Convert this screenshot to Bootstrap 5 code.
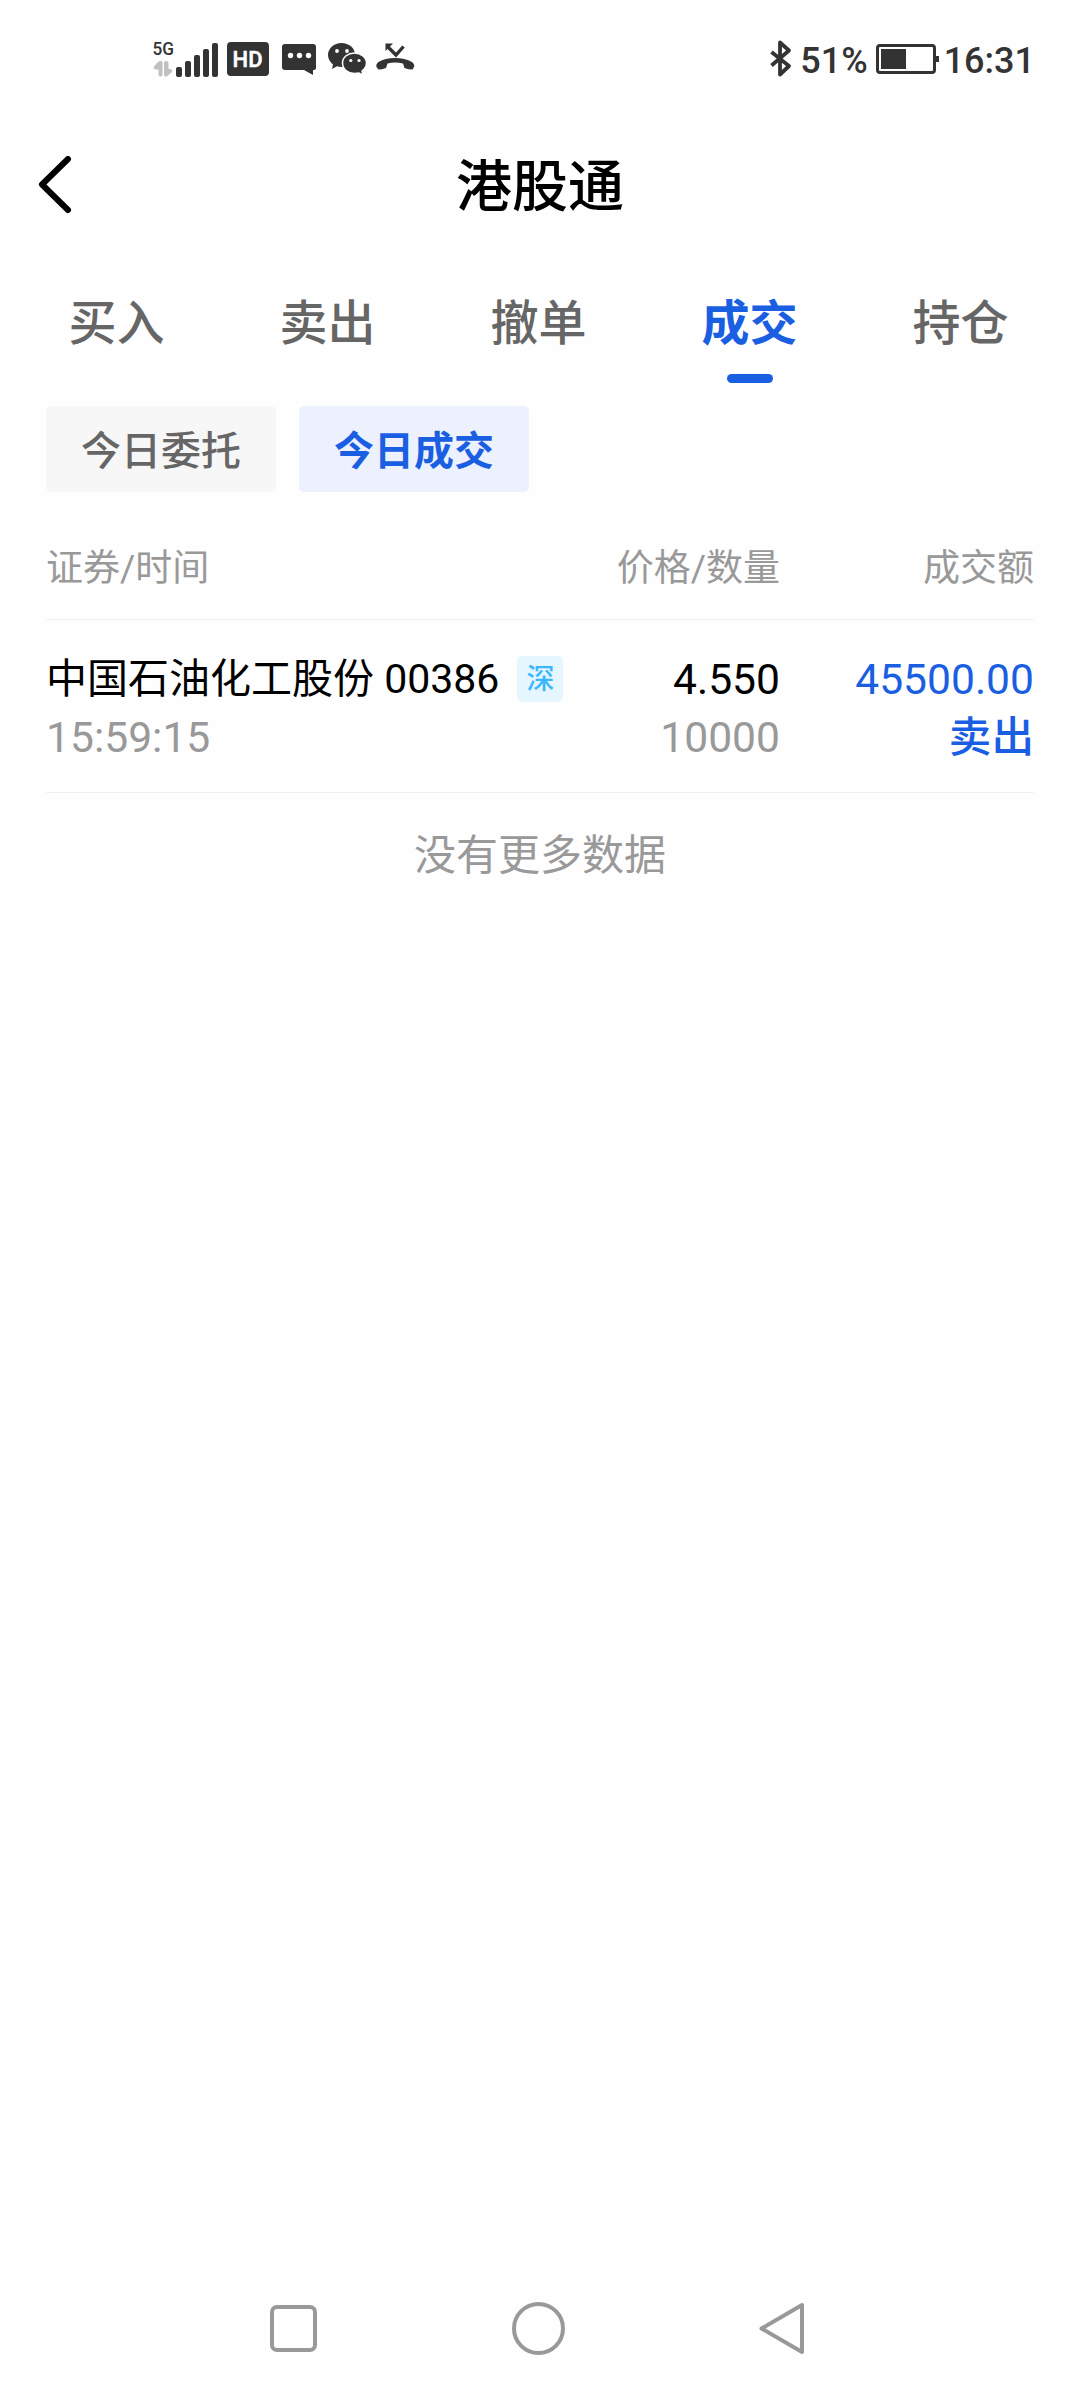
<!DOCTYPE html>
<html lang="zh-CN">
<head>
<meta charset="utf-8">
<meta name="viewport" content="width=device-width, initial-scale=1">
<title>港股通</title>
<link rel="stylesheet" href="https://cdn.jsdelivr.net/npm/bootstrap@5.3.0/dist/css/bootstrap.min.css">
<style>
  :root { --blue: #1a5fe2; --ink: #333; --muted: #999; --text: #666; }
  body { font-family: Roboto, "Noto Sans CJK SC", sans-serif; background: #fefefe; color: #000; height: 2400px; overflow: hidden; }
  svg { display: block; flex: none; }
  .status-bar { height: 120px; padding: 38px 45px 0 150px; color: var(--ink); }
  .status-bar .cell { height: 42px; }
  .status-text { font-size: 36px; font-weight: 500; line-height: 42px; padding-top: 3px; }
  .clock { margin-left: 4px; }
  .title-bar { height: 132px; padding: 0 36px; }
  .title-bar h1 { font-size: 56px; line-height: 64px; font-weight: 500; padding-top: 2px; }
  .side { width: 40px; }
  .trade-tabs { padding: 0 14px 0 11px; height: 154px; }
  .trade-tabs .nav-link { color: var(--text); font-size: 48px; line-height: 60px; padding: 42px 0 0; font-weight: 500; height: 100%; }
  .trade-tabs .nav-link.active { color: var(--blue); font-weight: 700; }
  .trade-tabs .bar { display: block; width: 46px; height: 9px; border-radius: 5px; background: var(--blue); margin: 20px auto 0; }
  .filters { padding: 0 46px; gap: 23px; }
  .filters .btn { width: 230px; height: 86px; padding: 6px 0 0; border: 0; border-radius: 5px; font-size: 40px; line-height: 80px; font-weight: 500; background: #f7f7f7; color: var(--text); }
  .filters .btn.active { background: #ecf1fd; color: var(--blue); font-weight: 700; }
  .deals { padding: 0 46px; }
  .line-row { border-bottom: 1px solid #f1f1f1; }
  .head { height: 128px; font-size: 37px; line-height: 44px; padding-top: 55px; color: var(--muted); }
  .deal { height: 173px; padding-top: 30px; font-size: 42.600px; line-height: 58px; }
  .c-price { width: 300px; }
  .c-sum { width: 254px; }
  .stock { font-size: 41px; }
  .exch { width: 46px; height: 46px; border-radius: 6px; background: #e5f6ff; color: #3ab7ff; font-size: 28px; font-weight: 500; line-height: 48px; margin-left: 18px; }
  .muted { color: var(--muted); }
  .blue { color: var(--blue); }
  .sell { font-weight: 500; }
  .none { font-size: 42px; line-height: 60px; margin-top: 33px; }
  .nav-keys { padding: 0 275px 45px 270px; }
</style>
<script src="https://cdn.jsdelivr.net/npm/bootstrap@5.3.0/dist/js/bootstrap.bundle.min.js"></script>
</head>
<body class="d-flex flex-column">
  <div class="status-bar d-flex justify-content-between align-items-start">
    <svg width="270" height="42" viewBox="150 38 270 42" fill="#333">
      <text x="152.500" y="55" font-size="18.500" font-weight="500" textLength="21.500" lengthAdjust="spacingAndGlyphs">5G</text>
      <path d="M154 66.500l4-4.500q1.500-1.500 3.500-1 1 .3 1 2v11.500q0 2-2 2t-2-2V69.500h-2.500q-3-.500-2-3zM172 72l-4 3.500q-1.500 1.500-3 1-1-.500-1-2V63q0-2 2-2t2.500 2v6h1.500q3 .5 2 3z" fill="#c0c0c0"/>
      <rect x="176" y="67" width="6" height="10" rx="2"/><rect x="185" y="61" width="6" height="16" rx="2"/><rect x="194" y="55" width="6" height="22" rx="2"/><rect x="203" y="49" width="6" height="28" rx="2"/><rect x="212" y="43" width="6" height="34" rx="2"/>
      <rect x="227" y="42" width="42" height="34" rx="4"/>
      <text x="232.500" y="67" font-size="22" font-weight="500" fill="#fff" stroke="#fff" stroke-width=".5" textLength="30" lengthAdjust="spacing">HD</text>
      <path d="M285 44h28q3 0 3 3v21q0 2-3 2v5l-9-5h-19q-3 0-3-3V47q0-3 3-3z"/>
      <g fill="#fefefe"><circle cx="290.500" cy="55.500" r="2.700"/><circle cx="299.500" cy="55.500" r="2.700"/><circle cx="308.500" cy="55.500" r="2.700"/></g>
      <path d="M341.500 43c7.500 0 13.500 5 13.500 11.500S349 67 341.500 67q-2.500 0-4.500-.7l-5 2.700 1-4.500c-3-2.300-5-5.800-5-9.500C328 48.500 334 43 341.500 43z"/>
      <circle cx="337" cy="51" r="1.900" fill="#fefefe"/><circle cx="347" cy="51" r="1.900" fill="#fefefe"/>
      <path d="M354.500 53c6.500 0 12 4.500 12 10 0 3.500-1.800 6-4.500 8l1 4.500-4-2.500q-2 .5-4.500.5c-6.500 0-12-4.500-12-10.500s5.500-10 12-10z" stroke="#fefefe" stroke-width="1.500"/>
      <circle cx="350.800" cy="60.500" r="1.600" fill="#fefefe"/><circle cx="359" cy="60.500" r="1.600" fill="#fefefe"/>
      <path d="M376.500 67q-1-2.500 2-5Q385 58 395 58t17 4q3 2.500 2 5l-1.500 2.500q-4 0-8-1.500l-1.500-4.500q-8-2-15.500 0L386 68q-4 1.500-7.500 1.500z"/>
      <path d="M388 47l8 8 7.500-8.500" fill="none" stroke="#333" stroke-width="3.400"/><path d="M385.500 43.500h7.500l-7.500 7.500z"/>
    </svg>
    <div class="d-flex align-items-center cell">
      <svg width="22" height="38" viewBox="770 40 22 38" fill="none" stroke="#333" stroke-width="3.800" stroke-linejoin="round"><path d="M771.500 52l17.500 14-9 8.500V42.500l9 8-17.500 15"/></svg>
      <span class="status-text ms-2">51%</span>
      <svg class="ms-2" width="64" height="30" viewBox="876 44 64 30"><rect x="877.500" y="45.500" width="57" height="27" rx="2.500" fill="none" stroke="#333" stroke-width="3"/><path d="M881 49h25v20h-25zM935 56h4v6h-4z" fill="#333"/></svg>
      <span class="status-text clock">16:31</span>
    </div>
  </div>

  <header class="title-bar d-flex align-items-center justify-content-between">
    <div class="side"><svg width="40" height="60" viewBox="36 156 40 60" fill="none" stroke="#000" stroke-width="6" stroke-linecap="round" stroke-linejoin="round"><path d="M68 159L42 184.500 68 210"/></svg></div>
    <h1 class="m-0">港股通</h1>
    <div class="side"></div>
  </header>

  <nav class="trade-tabs nav nav-justified flex-nowrap">
    <a class="nav-item nav-link" href="#">买入</a>
    <a class="nav-item nav-link" href="#">卖出</a>
    <a class="nav-item nav-link" href="#">撤单</a>
    <a class="nav-item nav-link active" href="#">成交<span class="bar"></span></a>
    <a class="nav-item nav-link" href="#">持仓</a>
  </nav>

  <div class="filters d-flex">
    <button class="btn" type="button">今日委托</button>
    <button class="btn active" type="button">今日成交</button>
  </div>

  <main class="deals flex-grow-1">
    <div class="line-row head d-flex">
      <div class="flex-grow-1">证券/时间</div>
      <div class="c-price text-end">价格/数量</div>
      <div class="c-sum text-end">成交额</div>
    </div>
    <div class="line-row deal d-flex">
      <div class="flex-grow-1 text-nowrap">
        <div class="stock d-flex align-items-center"><span>中国石油化工股份 00386</span><span class="exch text-center">深</span></div>
        <div class="muted">15:59:15</div>
      </div>
      <div class="text-end"><div>4.550</div><div class="muted">10000</div></div>
      <div class="c-sum text-end blue"><div>45500.00</div><div class="sell">卖出</div></div>
    </div>
    <div class="none muted text-center">没有更多数据</div>
  </main>

  <footer class="nav-keys d-flex justify-content-between align-items-center">
    <svg width="47" height="47" viewBox="0 0 47 47" fill="none" stroke="#999" stroke-width="4"><rect x="2" y="2" width="43" height="43" rx="5"/></svg>
    <svg width="53" height="53" viewBox="0 0 53 53" fill="none" stroke="#999" stroke-width="4"><circle cx="26.500" cy="26.500" r="24.500"/></svg>
    <svg width="46" height="53" viewBox="0 0 46 53" fill="none" stroke="#999" stroke-width="4" stroke-linejoin="round"><path d="M2.500 26.500L43 3v47z"/></svg>
  </footer>
</body>
</html>
